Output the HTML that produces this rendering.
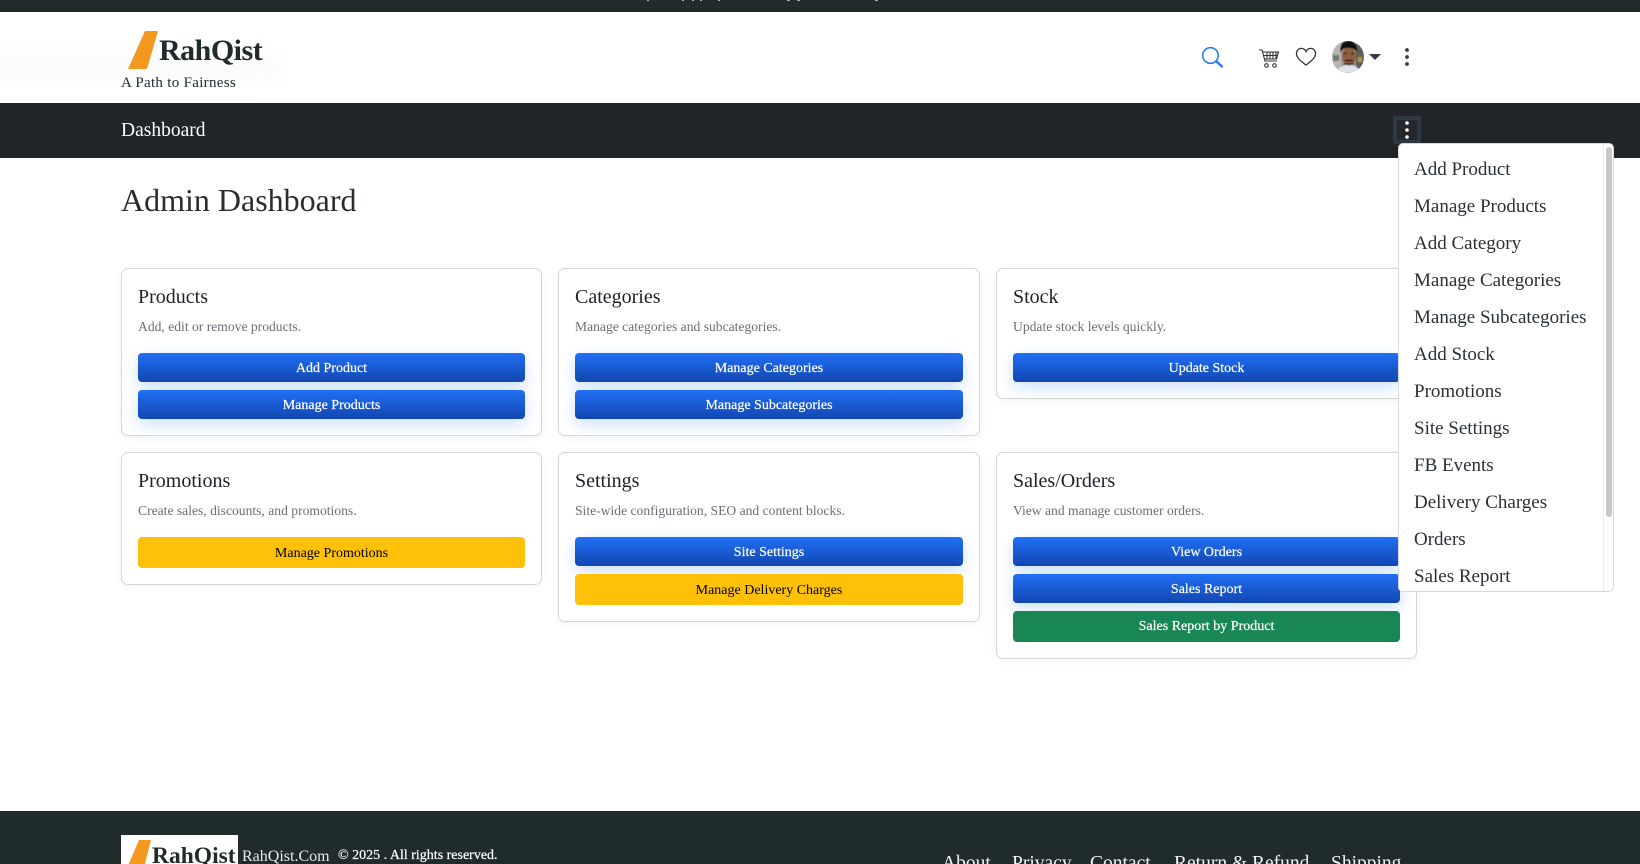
<!DOCTYPE html>
<html lang="en">
<head>
<meta charset="utf-8">
<title>Admin Dashboard</title>
<style>
html,body{margin:0;padding:0;width:1640px;height:864px;overflow:hidden;background:#fff;font-family:"Liberation Serif",serif;color:#212529}
*{box-sizing:border-box}
.abs,.card,.btn,.t,.d,.mi,.fl{position:absolute}
.t,.d,.mi,.fl,.abs{white-space:nowrap}
.card{background:#fff;border:1px solid #d6d6d6;border-radius:7px;box-shadow:0 2px 8px rgba(0,0,0,.05)}
.title{position:absolute;left:16px;top:14px;font-size:20px;line-height:28px;color:#1d2125}
.desc{position:absolute;left:16px;top:48px;font-size:13.6px;line-height:20px;color:#6b6f73}
.btn{left:16px;width:387px;height:29px;border-radius:4px;text-align:center;font-size:14px;line-height:31px;color:#fff;background:linear-gradient(180deg,#2170f5 0%,#1246b0 100%);box-shadow:0 6px 16px rgba(13,110,253,.2);-webkit-text-stroke:.2px #fff}
.w{height:31px;line-height:33px;background:#ffc107;color:#000;box-shadow:none;-webkit-text-stroke:0}
.g{height:31px;line-height:32px;background:#198754;box-shadow:none}
.mi{left:15px;font-size:19px;line-height:28px;color:#2b3035}
.fl{top:40px;font-size:19.5px;line-height:26px;color:#f4f4f4}
.sp{position:absolute;top:0;width:2px;height:1px;background:#a9adad}
</style>
</head>
<body>
<div class="abs" style="left:0;top:0;width:1640px;height:12px;background:#212b2c;overflow:hidden">
<i class="sp" style="left:647px"></i><i class="sp" style="left:682px"></i><i class="sp" style="left:692px"></i><i class="sp" style="left:700px"></i><i class="sp" style="left:718px"></i><i class="sp" style="left:787px;width:3px"></i><i class="sp" style="left:797px;width:3px"></i><i class="sp" style="left:875px;width:3px"></i>
</div>
<div class="abs" style="left:0;top:12px;width:320px;height:91px;overflow:hidden"><div class="abs" style="left:-30px;top:44px;width:310px;height:22px;background:#fafafa;filter:blur(9px)"></div></div>

<svg class="abs" style="left:120px;top:25px" width="50" height="50" viewBox="0 0 50 50"><polygon points="25,6 38,6 27,44 8,44" fill="#f4991f"/></svg>
<div class="abs" style="left:159px;top:31px;font-size:30px;line-height:40px;font-weight:bold;color:#212b2c;letter-spacing:-.5px">RahQist</div>
<div class="abs" style="left:121px;top:73px;font-size:15px;line-height:20px;color:#212b2c;letter-spacing:.3px">A Path to Fairness</div>

<svg class="abs" style="left:1200px;top:45px" width="24" height="24" viewBox="0 0 24 24" fill="none" stroke="#2a7bf5"><circle cx="10.5" cy="10.5" r="7.8" stroke-width="1.6"/><path d="M16.2 16.2L22 21.5" stroke-width="2.4" stroke-linecap="round"/></svg>
<svg class="abs" style="left:1258px;top:47px" width="22" height="22" viewBox="0 0 22 22" fill="none" stroke="#333" stroke-width="1.1"><path d="M1 3H4L7 14H19"/><path d="M4.6 5H20.5L18.5 12H6.5"/><path d="M9 5V12M12 5V12M15 5V12M18 5V12M5.5 8.5H20"/><circle cx="8.5" cy="18.5" r="1.8"/><circle cx="16.5" cy="18.5" r="1.8"/></svg>
<svg class="abs" style="left:1295px;top:47px" width="22" height="20" viewBox="0 0 24 22" fill="none" stroke="#333" stroke-width="1.4"><path d="M12 20C6 15 1.5 12 1.5 7C1.5 3.8 4 1.5 6.8 1.5C9 1.5 11 2.8 12 5C13 2.8 15 1.5 17.2 1.5C20 1.5 22.5 3.8 22.5 7C22.5 12 18 15 12 20Z"/></svg>

<svg class="abs" style="left:1332px;top:41px" width="32" height="32" viewBox="0 0 32 32">
<defs><clipPath id="c"><circle cx="16" cy="16" r="16"/></clipPath><filter id="b"><feGaussianBlur stdDeviation=".6"/></filter></defs>
<g clip-path="url(#c)"><rect width="32" height="32" fill="#9a9c99"/><g filter="url(#b)"><rect x="0" y="0" width="9" height="32" fill="#b5b6b3"/><rect x="1" y="14" width="6" height="6" fill="#6f7a68"/><rect x="24" y="0" width="8" height="32" fill="#5f5f58"/><rect x="26" y="16" width="4" height="5" fill="#b09a3c"/><path d="M5 32C6 26 11 24 17 24S27 26 28 32Z" fill="#dbe4ee"/><ellipse cx="17" cy="15" rx="7" ry="9.5" fill="#8f5f40"/><path d="M8.5 12C7 3 12 0 17 0S26 4 25 12C24 8 21 7 16 7S10 8 8.5 12Z" fill="#101010"/><path d="M12 12.5H15M19 12.5H22" stroke="#1c1008" stroke-width="1.2"/><path d="M13 19.5H21" stroke="#2c1a12" stroke-width="1.6"/><path d="M12 23H22" stroke="#3a2418" stroke-width="1.4"/></g></g>
</svg>
<div class="abs" style="left:1369px;top:54px;width:0;height:0;border-left:6px solid transparent;border-right:6px solid transparent;border-top:6px solid #343a40"></div>
<svg class="abs" style="left:1403px;top:47px" width="8" height="20" viewBox="0 0 8 20" fill="#343a40"><circle cx="4" cy="3" r="1.9"/><circle cx="4" cy="10" r="1.9"/><circle cx="4" cy="17" r="1.9"/></svg>

<div class="abs" style="left:0;top:103px;width:1640px;height:55px;background:#212529"></div>
<div class="abs" style="left:121px;top:117px;font-size:19.5px;line-height:28px;color:#fff">Dashboard</div>
<div class="abs" style="left:1393px;top:116px;width:28px;height:28px;border:4px solid #2d3843;background:#24282d"></div>
<svg class="abs" style="left:1403px;top:120px" width="8" height="20" viewBox="0 0 8 20" fill="#fff"><circle cx="4" cy="3" r="1.8"/><circle cx="4" cy="10" r="1.8"/><circle cx="4" cy="17" r="1.8"/></svg>

<div class="abs" style="left:121px;top:180px;font-size:32px;line-height:40px;color:#292d31">Admin Dashboard</div>

<div class="card" style="left:121px;top:268px;width:421px;height:168px"><div class="title">Products</div><div class="desc">Add, edit or remove products.</div><div class="btn" style="top:84px">Add Product</div><div class="btn" style="top:121px">Manage Products</div></div>
<div class="card" style="left:558px;top:268px;width:422px;height:168px"><div class="title">Categories</div><div class="desc">Manage categories and subcategories.</div><div class="btn" style="top:84px;width:388px">Manage Categories</div><div class="btn" style="top:121px;width:388px">Manage Subcategories</div></div>
<div class="card" style="left:996px;top:268px;width:421px;height:131px"><div class="title">Stock</div><div class="desc">Update stock levels quickly.</div><div class="btn" style="top:84px">Update Stock</div></div>
<div class="card" style="left:121px;top:452px;width:421px;height:133px"><div class="title">Promotions</div><div class="desc">Create sales, discounts, and promotions.</div><div class="btn w" style="top:84px">Manage Promotions</div></div>
<div class="card" style="left:558px;top:452px;width:422px;height:170px"><div class="title">Settings</div><div class="desc">Site-wide configuration, SEO and content blocks.</div><div class="btn" style="top:84px;width:388px">Site Settings</div><div class="btn w" style="top:121px;width:388px">Manage Delivery Charges</div></div>
<div class="card" style="left:996px;top:452px;width:421px;height:207px"><div class="title">Sales/Orders</div><div class="desc">View and manage customer orders.</div><div class="btn" style="top:84px">View Orders</div><div class="btn" style="top:121px">Sales Report</div><div class="btn g" style="top:158px">Sales Report by Product</div></div>

<div class="abs" style="left:1398px;top:143px;width:216px;height:449px;background:#fff;border:1px solid #d9d9d9;border-radius:5px;overflow:hidden">
<div class="mi" style="top:12px">Add Product</div>
<div class="mi" style="top:49px">Manage Products</div>
<div class="mi" style="top:86px">Add Category</div>
<div class="mi" style="top:123px">Manage Categories</div>
<div class="mi" style="top:160px">Manage Subcategories</div>
<div class="mi" style="top:197px">Add Stock</div>
<div class="mi" style="top:234px">Promotions</div>
<div class="mi" style="top:271px">Site Settings</div>
<div class="mi" style="top:308px">FB Events</div>
<div class="mi" style="top:345px">Delivery Charges</div>
<div class="mi" style="top:382px">Orders</div>
<div class="mi" style="top:419px">Sales Report</div>
<div class="abs" style="left:204px;top:0;width:11px;height:448px;background:#fff;border-left:1px solid #ececec"></div>
<div class="abs" style="left:207px;top:3px;width:6px;height:370px;background:#c8c8c8;border-radius:3px"></div>
</div>

<div class="abs" style="left:0;top:811px;width:1640px;height:53px;background:#202b2c;overflow:hidden">
<div class="abs" style="left:121px;top:24px;width:117px;height:29px;background:#fff;overflow:hidden">
<svg class="abs" style="left:0;top:0" width="40" height="40" viewBox="0 0 40 40"><polygon points="18,5 30,5 21,40 3,40" fill="#f4991f"/></svg>
<div class="abs" style="left:31px;top:3px;font-size:23.5px;line-height:36px;font-weight:bold;color:#212b2c">RahQist</div>
</div>
<div class="abs" style="left:242px;top:36px;font-size:16px;line-height:20px;color:#e9e9e9">RahQist.Com</div>
<div class="abs" style="left:338px;top:35px;font-size:14px;line-height:20px;color:#fff;-webkit-text-stroke:.2px #fff">© 2025 . All rights reserved.</div>
<div class="fl" style="left:942px">About</div>
<div class="fl" style="left:1012px">Privacy</div>
<div class="fl" style="left:1090px">Contact</div>
<div class="fl" style="left:1174px">Return &amp; Refund</div>
<div class="fl" style="left:1331px">Shipping</div>
</div>
</body>
</html>
